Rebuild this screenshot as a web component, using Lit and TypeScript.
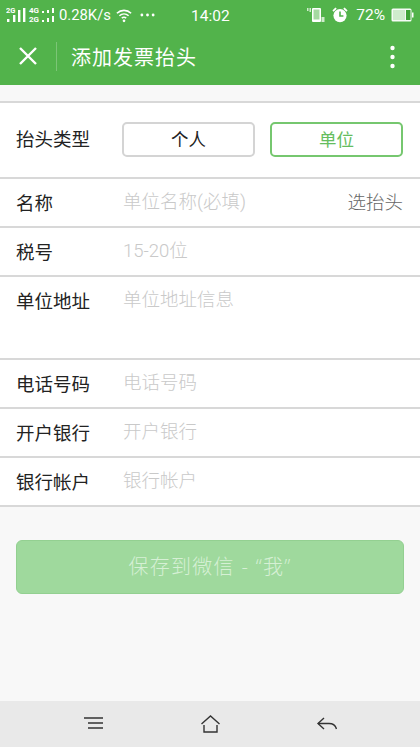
import { LitElement, html, css } from "lit";
import { customElement } from "lit/decorators.js";

const rows = [
  { label: "名称", ph: "单位名称(必填)", extra: "选抬头", cls: "" },
  { label: "税号", ph: "15-20位", extra: "", cls: "" },
  { label: "单位地址", ph: "单位地址信息", extra: "", cls: "tall" },
  { label: "电话号码", ph: "电话号码", extra: "", cls: "" },
  { label: "开户银行", ph: "开户银行", extra: "", cls: "" },
  { label: "银行帐户", ph: "银行帐户", extra: "", cls: "" },
];

@customElement("app-root")
export class AppRoot extends LitElement {
  static styles = css`
    :host {
      display: flex;
      flex-direction: column;
      width: 420px;
      height: 747px;
      overflow: hidden;
      background: #f8f8f8;
      font-family: "Roboto", "Noto Sans CJK SC", sans-serif;
      font-weight: 300;
      position: relative;
    }
    .top { height: 85px; background: #52b34b; color: #fff; flex: none; display: flex; flex-direction: column; }
    .status { height: 30px; display: flex; align-items: center; padding: 0 6px 0 6px; font-size: 15.5px; font-weight: 400; }
    .status svg { display: block; flex: none; }
    .speed { margin-left: 0; margin-right: 5px; font-size: 14.8px; }
    .dots { margin-left: 8px; }
    .clock { position: absolute; left: 191px; top: 6px; line-height: 20px; }
    .spacer { flex: 1; }
    .pct { margin: 0 6px 0 8px; }
    .bar { flex: 1; display: flex; align-items: center; padding-bottom: 3px; }
    .close { margin-left: 18px; flex: none; display: block; }
    .divider { width: 1px; height: 29px; background: #7cc576; margin-left: 18px; }
    .title { font-size: 20px; margin-left: 14px; letter-spacing: 1px; font-weight: 400; }
    .more { margin-left: auto; margin-right: 25px; margin-top: 1px; display: block; }
    .form { margin-top: 16px; border-top: 2px solid #d8d8d8; background: #fff; flex: none; }
    .row {
      box-sizing: border-box;
      height: 49px;
      border-bottom: 2px solid #d8d8d8;
      display: flex;
      align-items: center;
      padding: 2px 17px 0 16px;
      font-size: 18.5px;
      color: #222;
    }
    .row.tall { align-items: flex-start; padding-top: 12px; height: 83px; }
    .row.type { height: 76px; padding-top: 0; }
    .label { width: 107px; flex: none; line-height: 26px; font-weight: 400; }
    .ph { color: #c9c9c9; flex: 1; line-height: 24px; margin-top: -4px; }
    .tall .ph { margin-top: -1px; }
    .extra { color: #666; margin-bottom: 6px; }
    .btns { display: flex; gap: 15px; flex: 1; margin: 0 0 1px -1px; }
    .btn {
      width: 133px;
      height: 35px;
      padding-bottom: 2px;
      box-sizing: border-box;
      border: 2px solid #d4d4d4;
      border-radius: 5px;
      display: flex;
      align-items: center;
      justify-content: center;
      font-size: 17.5px;
      color: #222;
      font-weight: 400;
    }
    .btn.on { border-color: #76c76f; color: #65bd5e; }
    .save {
      margin: 33px 16px 0;
      height: 54px;
      padding-bottom: 4px;
      box-sizing: border-box;
      background: #9fd99d;
      border: 1px solid #93d091;
      border-radius: 6px;
      color: #d6f0d5;
      font-family: "Open Sans", "Noto Sans CJK SC", sans-serif;
      font-size: 20px;
      display: flex;
      align-items: center;
      justify-content: center;
      letter-spacing: 1.3px;
      flex: none;
    }
    .nav {
      margin-top: auto;
      height: 46px;
      background: #e9e9e9;
      flex: none;
      position: relative;
    }
    .nav svg { position: absolute; }
    .i1 { left: 84px; top: 14px; }
    .i2 { left: 200px; top: 13px; }
    .i3 { left: 316px; top: 15px; }
  `;

  render() {
    return html`
      <div class="top">
        <div class="status">
          <svg width="53" height="30" viewBox="0 0 53 30" fill="#fff">
            <text x="0" y="13" font-size="7.5" font-family="Roboto" font-weight="700">2G</text>
            <rect x="1" y="19" width="2.4" height="3"></rect>
            <rect x="7" y="15" width="2.4" height="7"></rect>
            <rect x="12" y="10" width="2.4" height="12"></rect>
            <rect x="17" y="8" width="2.4" height="14"></rect>
            <text x="23" y="13" font-size="8" font-family="Roboto" font-weight="700">4G</text>
            <text x="23" y="22" font-size="8" font-family="Roboto" font-weight="700">2G</text>
            <rect x="36" y="11" width="2" height="2"></rect><rect x="41" y="10" width="2" height="3"></rect><rect x="46" y="8" width="2" height="5"></rect>
            <rect x="36" y="20" width="2" height="2"></rect><rect x="41" y="18" width="2" height="4"></rect><rect x="46" y="16" width="2" height="6"></rect>
          </svg>
          <span class="speed">0.28K/s</span>
          <svg width="16" height="15" viewBox="0 0 18 16" fill="none" stroke="#fff" stroke-width="1.8">
            <path d="M1 5.5C5.5 1.2 12.5 1.2 17 5.5"></path>
            <path d="M3.8 8.3C6.8 5.6 11.2 5.6 14.2 8.3"></path>
            <path d="M6.5 11C8 9.8 10 9.8 11.5 11"></path>
            <circle cx="9" cy="14" r="1.5" fill="#fff" stroke="none"></circle>
          </svg>
          <svg class="dots" width="15" height="4" viewBox="0 0 16 4" fill="#fff">
            <circle cx="2" cy="2" r="1.5"></circle><circle cx="8" cy="2" r="1.5"></circle><circle cx="14" cy="2" r="1.5"></circle>
          </svg>
          <span class="clock">14:02</span>
          <span class="spacer"></span>
          <svg width="18" height="16" viewBox="0 0 18 16">
            <rect x="5" y="1" width="9" height="14" rx="1" fill="#fff"></rect>
            <rect x="6.5" y="2.5" width="6" height="10" fill="#a5d9a1"></rect>
            <rect x="0" y="1" width="1.5" height="3" fill="#cfeccd"></rect>
            <rect x="2.5" y="1" width="1.5" height="4" fill="#cfeccd"></rect>
            <rect x="14.5" y="10" width="3" height="5" fill="#cfeccd"></rect>
          </svg>
          <svg width="16" height="16" viewBox="0 0 16 16" style="margin-left:7px">
            <circle cx="8" cy="8.6" r="6.6" fill="#fff"></circle>
            <path d="M8 4.6V9H11.4" fill="none" stroke="#52b34b" stroke-width="1.6"></path>
            <path d="M0.4 3.4L3.4 0.6L4.8 1.8L1.6 4.8Z M15.6 3.4L12.6 0.6L11.2 1.8L14.4 4.8Z" fill="#fff"></path>
          </svg>
          <span class="pct">72%</span>
          <svg width="23" height="14" viewBox="0 0 23 14">
            <rect x="0.5" y="0.5" width="20" height="13" rx="1.5" fill="#fff" opacity=".95"></rect>
            <rect x="2" y="2" width="12" height="10" fill="#cfeccd"></rect>
            <rect x="15" y="2" width="4.5" height="10" fill="#3fa338"></rect>
            <rect x="21" y="4.5" width="1.5" height="5" fill="#fff"></rect>
          </svg>
        </div>
        <div class="bar">
          <svg class="close" width="20" height="20" viewBox="0 0 20 20" stroke="#fff" stroke-width="2.4" fill="none">
            <path d="M2 2L18 18M18 2L2 18"></path>
          </svg>
          <div class="divider"></div>
          <div class="title">添加发票抬头</div>
          <svg class="more" width="5" height="24" viewBox="0 0 5 24" fill="#fff">
            <circle cx="2.5" cy="3" r="2.2"></circle><circle cx="2.5" cy="12" r="2.2"></circle><circle cx="2.5" cy="21" r="2.2"></circle>
          </svg>
        </div>
      </div>
      <div class="form">
        <div class="row type">
          <div class="label">抬头类型</div>
          <div class="btns">
            <div class="btn">个人</div>
            <div class="btn on">单位</div>
          </div>
        </div>
        ${rows.map(
          (r) => html`
            <div class="row ${r.cls}">
              <div class="label">${r.label}</div>
              <div class="ph">${r.ph}</div>
              ${r.extra ? html`<div class="extra">${r.extra}</div>` : ""}
            </div>
          `
        )}
      </div>
      <div class="save">保存到微信 - “我”</div>
      <div class="nav">
        <svg class="i1" width="20" height="16" viewBox="0 0 20 16" stroke="#333" stroke-width="1.4" fill="none">
          <path d="M0 3H19M4 8H19M4 13H19"></path>
        </svg>
        <svg class="i2" width="21" height="20" viewBox="0 0 21 20" stroke="#333" stroke-width="1.4" fill="none">
          <path d="M1.5 10L10.5 2L19.5 10"></path>
          <path d="M4 11V18H17V11"></path>
        </svg>
        <svg class="i3" width="21" height="16" viewBox="0 0 21 16" stroke="#333" stroke-width="1.4" fill="none">
          <path d="M8 2L2 7.5L8 13"></path>
          <path d="M2 7.5H13C17 7.5 19.5 9.5 20.5 13"></path>
        </svg>
      </div>
    `;
  }
}
